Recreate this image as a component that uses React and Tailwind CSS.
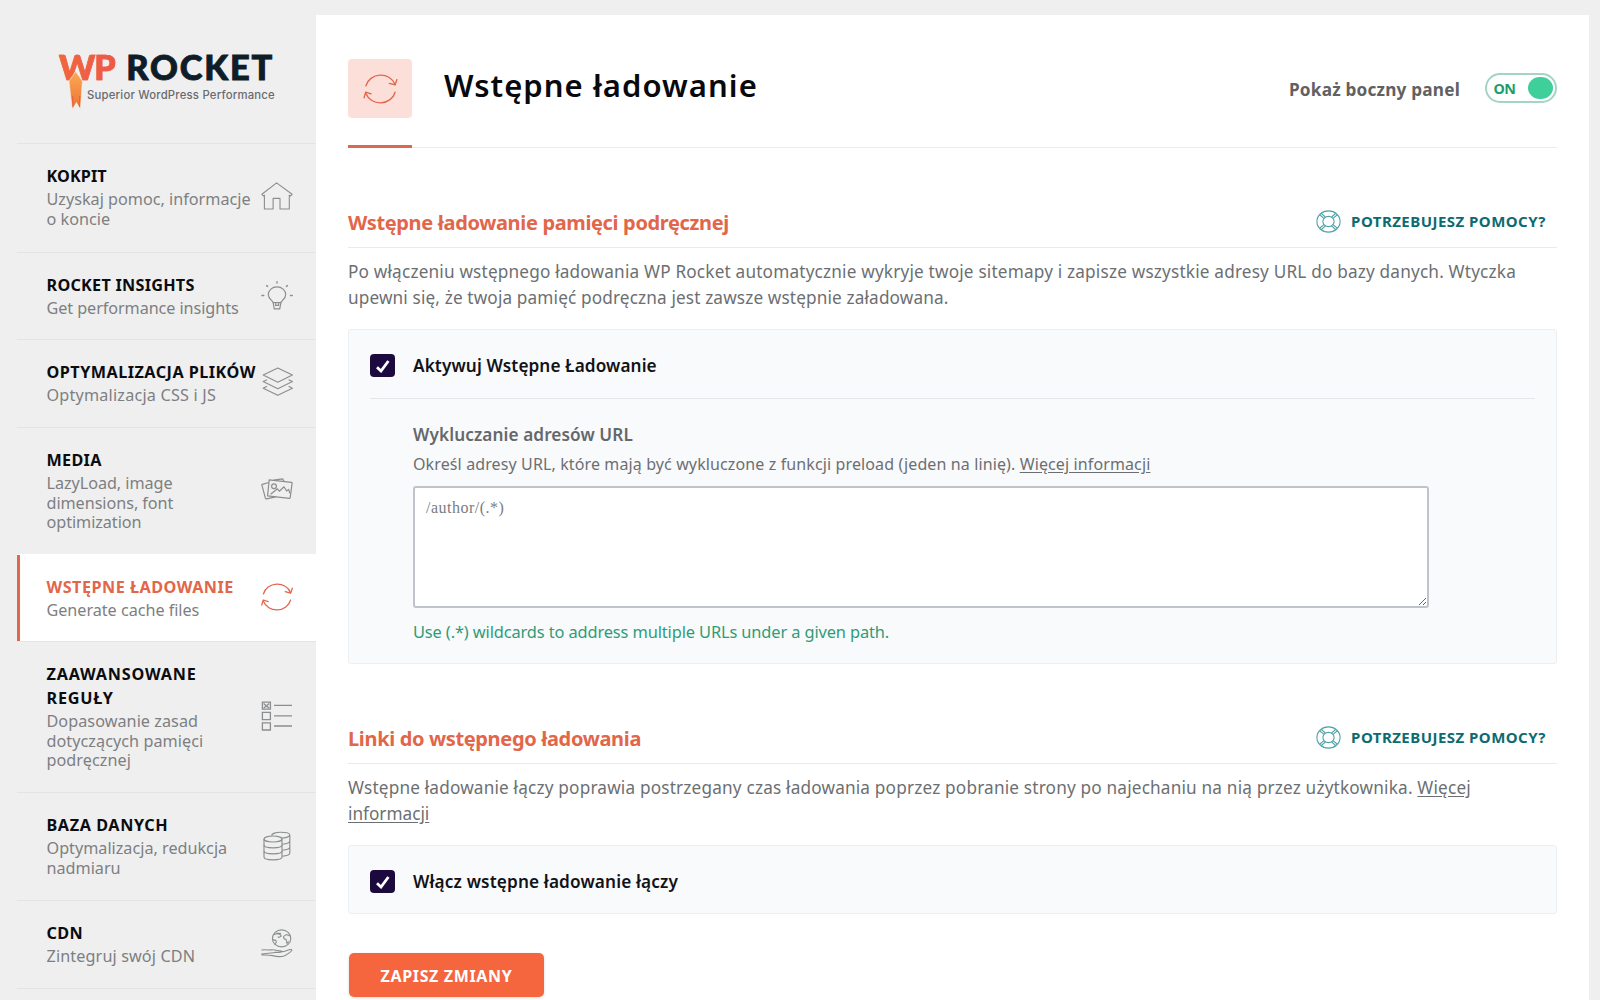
import React from "react";

function HomeIcon() {
  return (
    <svg width="32" height="28" viewBox="0 0 32 28" fill="none" stroke="currentColor" strokeWidth="1.1">
      <path d="M15.6 .9 L.9 12.3 L2.3 14 L3.4 13.1 V27 H12.1 V16.4 H19 V27 H28.3 V13.1 L29.7 14 L31.1 12.3 Z" strokeLinejoin="round" />
    </svg>
  );
}

function BulbIcon() {
  return (
    <svg width="32" height="30" viewBox="0 0 32 30" fill="none" stroke="currentColor" strokeWidth="1.2" strokeLinecap="round">
      <path d="M12.2 21.7 C12 19.8 7.3 18 7.3 13.7 A8.7 7.9 0 0 1 24.7 13.7 C24.7 18 20.2 19.8 19.9 21.7 Z" />
      <path d="M12.2 22 L13.3 27.8 H18.7 L19.9 22 M14.7 22.6 V24.3 H17.6 V22.6" />
      <path d="M16 .8 V2 M5.6 4.6 L6.6 5.4 M26.4 4.6 L25.4 5.4 M.9 14.5 H2.8 M29.5 14.5 H31.2" strokeWidth="1.4" />
    </svg>
  );
}

function LayersIcon() {
  return (
    <svg width="32" height="30" viewBox="0 0 32 30" fill="none" stroke="currentColor" strokeWidth="1.15" strokeLinejoin="round">
      <path d="M16.8 1 L31.4 8.1 L16.8 15.2 L2.2 8.1 Z" />
      <path d="M6 12.7 L2.2 14.6 L16.8 21.7 L31.4 14.6 L27.6 12.7" />
      <path d="M6 19.2 L2.2 21.2 L16.8 28.3 L31.4 21.2 L27.6 19.2" />
    </svg>
  );
}

function MediaIcon() {
  return (
    <svg width="32" height="22" viewBox="0 0 32 22" fill="none" stroke="currentColor" strokeWidth="1.2" strokeLinejoin="round">
      <path d="M8.2 1.9 L30.4 4.3 Q31.2 4.5 31.1 5.2 L29.2 19.6 Q29 20.4 28.1 20.3 L6.6 17.9 Z" />
      <circle cx="13" cy="8.2" r="2.4" />
      <path d="M9.6 16.2 L16.4 10.8 L18.4 13.2 L23 8.8 L25.6 13 L27.6 11.4 L28.9 15.2" />
      <path d="M7.8 4.5 L1.3 6.3 Q.7 6.6 .9 7.2 L4.4 20.2 Q4.7 21 5.6 20.8 L14.6 18.9 M12.6 2.2 L21.6 .8 L23 3.3" />
    </svg>
  );
}

function RefreshIcon({ className }) {
  return (
    <svg className={className} viewBox="0 0 32 28" fill="none" stroke="currentColor" strokeWidth="1.25" strokeLinecap="round" strokeLinejoin="round">
      <path d="M2.4 11 A14.2 13 0 0 1 29.6 9.8" />
      <path d="M24.2 8.7 L29.6 10.2 L31.3 5.2" />
      <path d="M29.6 17 A14.2 13 0 0 1 2.4 18.2" />
      <path d="M7.2 18.6 L2.2 17 L.7 22.2" />
    </svg>
  );
}

function RulesIcon() {
  return (
    <svg width="32" height="30" viewBox="0 0 32 30" fill="none" stroke="currentColor" strokeWidth="1.3">
      <path d="M1.4 1.2 H9.4 V8.2 H1.4 Z M1.4 11.4 H9.4 V18.6 H1.4 Z M1.4 21.8 H9.4 V29 H1.4 Z" />
      <path d="M2.6 2.4 L8.2 7.2 M8.2 2.4 L2.6 7.2 M13 4.4 H31 M13 14.8 H31 M13 25 H31" />
    </svg>
  );
}

function DatabaseIcon() {
  return (
    <svg width="32" height="30" viewBox="0 0 32 30" fill="none" stroke="currentColor" strokeWidth="1.15">
      <ellipse cx="12" cy="8" rx="9" ry="3" />
      <path d="M3 8 V26 C3 27.8 7 28.8 12 28.8 S21 27.8 21 26 V8" />
      <path d="M3 14 C3 15.8 7 16.8 12 16.8 S21 15.8 21 14 M3 20 C3 21.8 7 22.8 12 22.8 S21 21.8 21 20" />
      <path d="M10.6 4.6 C10.6 2.6 14.8 1.2 19.8 1.2 S28.8 2.4 28.8 4 S25 7 20.4 7 M28.8 4 V22 C28.8 23.6 25.8 24.8 21.2 25.2 M28.8 10 C28.8 11.8 25.5 12.9 21.2 13.2 M28.8 16 C28.8 17.8 25.5 18.9 21.2 19.2" />
    </svg>
  );
}

function CdnIcon() {
  return (
    <svg width="32" height="29" viewBox="0 0 32 29" fill="none" stroke="currentColor" strokeWidth="1.1" strokeLinecap="round" strokeLinejoin="round">
      <ellipse cx="20.6" cy="9.4" rx="9.2" ry="8.5" />
      <path d="M13.4 5.6 L16.4 4.6 L19.2 5.4 L20.2 7 L18 8.4 L17 8 M11.8 10.6 L14.8 11.4 L15.4 13 L13.8 15.2 M28.6 6.8 L25.4 5.6 L22.6 7.4 L23 9.8 L25 10.4 L26 14.4 L27.4 12.6 M15.4 4.2 L19.4 4.4" />
      <path d="M.8 21 C3 20.6 5 20.6 7.2 21 C10 21.1 12.4 20.2 15 21.2 C17 22 19.6 21.6 21.4 22.4 C20.6 23.6 17 23.4 13.6 23.4 M21.4 22.8 C24.6 22.4 27.4 20.2 30.6 20.6 C31.8 21.8 27 25 24.2 26.4 C20.8 28 15.6 27.8 11.6 26.6 C8 25.8 4 26 1.6 26 Q.7 26 .7 25 Z" />
    </svg>
  );
}

function HelpIcon() {
  return (
    <svg width="25" height="23" viewBox="0 0 25 23" fill="none" stroke="#4fa3a8" strokeWidth="1.1">
      <ellipse cx="12.5" cy="11.5" rx="11.6" ry="10.6" />
      <ellipse cx="12.5" cy="11.5" rx="5.6" ry="5.1" />
      <path d="M3.6 4.8 L8 8.4 M5.2 3.4 L9.4 7 M21.4 4.8 L17 8.4 M19.8 3.4 L15.6 7 M3.6 18.2 L8 14.6 M5.2 19.6 L9.4 16 M21.4 18.2 L17 14.6 M19.8 19.6 L15.6 16" />
    </svg>
  );
}

const items = [
  { title: "KOKPIT", lines: ["Uzyskaj pomoc, informacje", "o koncie"], h: "h-[109px]", icon: <HomeIcon />, iconTop: "mt-[38px]", track: "tracking-[0.1px]" },
  { title: "ROCKET INSIGHTS", lines: ["Get performance insights"], h: "h-[87px]", icon: <BulbIcon />, iconTop: "mt-[28px]", track: "tracking-[0.26px]", descTrack: "tracking-[-0.07px]" },
  { title: "OPTYMALIZACJA PLIKÓW", lines: ["Optymalizacja CSS i JS"], h: "h-[88px]", icon: <LayersIcon />, iconTop: "mt-[27px]", track: "tracking-[0.48px]", descTrack: "tracking-[0.2px]" },
  { title: "MEDIA", lines: ["LazyLoad, image", "dimensions, font", "optimization"], h: "h-[127px]", icon: <MediaIcon />, iconTop: "mt-[50px]", track: "tracking-[0.3px]", descTrack: "tracking-[-0.05px]" },
  { title: "WSTĘPNE ŁADOWANIE", lines: ["Generate cache files"], h: "h-[87px]", icon: <RefreshIcon className="h-[28px] w-[32px]" />, iconTop: "mt-[28px]", track: "tracking-[0.49px]", descTrack: "tracking-[-0.03px]", active: true },
  { title: "ZAAWANSOWANE REGUŁY", lines: ["Dopasowanie zasad", "dotyczących pamięci", "podręcznej"], h: "h-[151px]", icon: <RulesIcon />, iconTop: "mt-[59px]", track: "tracking-[0.8px]", descTrack: "tracking-[0.05px]" },
  { title: "BAZA DANYCH", lines: ["Optymalizacja, redukcja", "nadmiaru"], h: "h-[108px]", icon: <DatabaseIcon />, iconTop: "mt-[38px]", track: "tracking-[0.6px]" },
  { title: "CDN", lines: ["Zintegruj swój CDN"], h: "h-[88px]", icon: <CdnIcon />, iconTop: "mt-[28px]", track: "tracking-[0.4px]", descTrack: "tracking-[0.12px]" },
];

function Logo() {
  return (
    <div className="h-[143px] pt-[46.5px] pl-[42px]">
      <div className="relative flex h-[40px] items-center font-['Lato',sans-serif] text-[34.4px] leading-[40px] font-black whitespace-nowrap">
        <span className="bg-gradient-to-r from-[#f0683c] to-[#ef564c] bg-clip-text tracking-[-1.1px] text-transparent [-webkit-text-stroke:0.7px_#f06243]">WP</span>
        <span className="ml-[11.5px] tracking-[1.85px] text-[#0f1d29] [-webkit-text-stroke:0.9px_#0f1d29]">ROCKET</span>
        <svg className="absolute top-[23px] left-[8px]" width="18" height="40" viewBox="0 0 18 40">
          <defs>
            <linearGradient id="flame" x1="0" y1="0" x2="0" y2="1">
              <stop offset="0" stopColor="#fbab52" />
              <stop offset="1" stopColor="#ee7038" />
            </linearGradient>
          </defs>
          <path d="M8.6 1.5 L15.4 11 L14.2 27 L13.2 39 L9.4 32.5 L5.4 39 L3.8 27 L2 11 Z" fill="url(#flame)" stroke="#efefef" strokeWidth=".6" />
          <path d="M6 36.5 L5.6 26 M12.6 36.5 L12.8 26" stroke="#e8612f" strokeWidth="1" />
        </svg>
      </div>
      <div className="ml-[28px] font-['Inter',sans-serif] text-[11.3px] leading-[16px] font-medium tracking-[0.22px] whitespace-nowrap text-[#6a6a6e]">
        Superior WordPress Performance
      </div>
    </div>
  );
}

function NavItem({ item }) {
  return (
    <a
      className={`${item.h} flex w-full shrink-0 border-t ${
        item.active ? "border-t-white bg-white shadow-[inset_3px_0_0_#e2664a]" : "border-t-[#e3e4e5]"
      } pl-[29.5px]`}
    >
      <div className="w-[214px] pt-[20px] text-[16.2px]">
        <div className={`leading-[24px] font-bold ${item.track} ${item.active ? "text-[#e2664a]" : "text-[#0b0c10]"}`}>
          {item.title}
        </div>
        <div className={`mt-[2px] leading-[19.7px] whitespace-nowrap text-[#7d7f82] ${item.descTrack || ""}`}>
          {item.lines.map((line) => (
            <div key={line}>{line}</div>
          ))}
        </div>
      </div>
      <div className={`${item.iconTop} ${item.active ? "text-[#e2664a]" : "text-[#8b8d8f]"}`}>{item.icon}</div>
    </a>
  );
}

function SectionHeader({ title, height }) {
  return (
    <div className={`${height} flex items-end justify-between border-b border-[#e8eaeb]`}>
      <h2 className="pb-[10px] text-[20px] leading-[28px] font-bold tracking-[-0.34px] text-[#e2664a]">{title}</h2>
      <div className="flex items-center gap-[10px] pr-[11px] pb-[14.5px]">
        <HelpIcon />
        <span className="text-[15px] leading-[20px] font-bold tracking-[0.47px] text-[#0d6b70]">POTRZEBUJESZ POMOCY?</span>
      </div>
    </div>
  );
}

function CheckRow({ label, track }) {
  return (
    <div className="flex h-[68px] items-start gap-[18px] pt-[24px]">
      <span className="flex h-[23px] w-[25px] items-center justify-center rounded-[4px] bg-[#1c0a3e]">
        <svg width="14" height="14" viewBox="0 0 14 14" fill="none" stroke="#fff" strokeWidth="2.8">
          <path d="M1 8.2 L5 12 L12.4 2" />
        </svg>
      </span>
      <span className={`text-[17.2px] leading-[24px] font-semibold text-[#121317] ${track}`}>{label}</span>
    </div>
  );
}

export default function App() {
  return (
    <div className="flex h-[1000px] w-[1600px] overflow-hidden bg-[#efefef] font-['Noto_Sans',sans-serif]">
      <aside className="ml-[17px] flex w-[299px] shrink-0 flex-col">
        <Logo />
        {items.map((item) => (
          <NavItem key={item.title} item={item} />
        ))}
        <div className="h-[12px] shrink-0 border-t border-[#e3e4e5]" />
      </aside>

      <main className="mt-[15px] mr-[11px] flex-1 bg-white pr-[32px] pl-[32px]">
        <header className="relative flex h-[133px] items-start border-b border-[#eaecec]">
          <div className="mt-[44px] flex h-[59px] w-[64px] items-center justify-center rounded-[4px] bg-[#fddfda] text-[#e2664a]">
            <RefreshIcon className="h-[30px] w-[35px]" />
          </div>
          <h1 className="mt-[50px] ml-[32px] text-[31px] leading-[40px] font-semibold tracking-[1.05px] text-[#08090d]">Wstępne ładowanie</h1>
          <span className="mt-[63px] ml-auto text-[17.2px] leading-[24px] font-bold tracking-[0.2px] text-[#5f6163]">Pokaż boczny panel</span>
          <div className="mt-[58px] ml-[25px] flex h-[30px] w-[72px] items-center justify-between rounded-full border-2 border-[#a3d4c6] bg-white pr-[2.5px] pl-[6.5px]">
            <span className="pt-[2px] text-[14.3px] leading-[20px] font-bold tracking-[-0.5px] text-[#1f9d6b]">ON</span>
            <span className="h-[22.5px] w-[24.5px] rounded-[50%] bg-[#3ecf9b]" />
          </div>
          <div className="absolute -bottom-px left-0 h-[3px] w-[64px] bg-[#d9694f]" />
        </header>

        <SectionHeader title="Wstępne ładowanie pamięci podręcznej" height="h-[100px]" />
        <p className="h-[81px] pt-[11px] text-[17.2px] leading-[26px] tracking-[0.182px] text-[#6c6f72]">
          <span className="whitespace-nowrap">
            Po włączeniu wstępnego ładowania WP Rocket automatycznie wykryje twoje sitemapy i zapisze wszystkie adresy URL do bazy danych. Wtyczka
          </span>
          <br />
          <span className="tracking-[0.14px]">upewni się, że twoja pamięć podręczna jest zawsze wstępnie załadowana.</span>
        </p>

        <section className="h-[335px] rounded-[3px] border border-[#eceff1] bg-[#f9fafc] px-[21px]">
          <CheckRow label="Aktywuj Wstępne Ładowanie" track="tracking-[0.1px]" />
          <div className="border-t border-[#e3e7ea] pl-[43px]">
            <h3 className="mt-[24px] text-[17.2px] leading-[24px] font-semibold tracking-[0.09px] text-[#65686b]">Wykluczanie adresów URL</h3>
            <p className="mt-[5px] text-[16px] leading-[24px] tracking-[0.12px] whitespace-nowrap text-[#6c6f72]">
              Określ adresy URL, które mają być wykluczone z funkcji preload (jeden na linię).{" "}
              <a className="underline underline-offset-2">Więcej informacji</a>
            </p>
            <textarea
              className="mt-[9.5px] block h-[122px] w-[1016px] rounded-[3px] border-2 border-[#bfc4cb] bg-white px-[11px] py-[10px] font-['Liberation_Serif',serif] text-[16px] leading-[20px] tracking-[0.5px] text-[#7b7d80] outline-none"
              defaultValue="/author/(.*)"
            />
            <p className="mt-[12.5px] text-[16.4px] leading-[24px] tracking-[-0.12px] text-[#2f9c77]">
              Use (.*) wildcards to address multiple URLs under a given path.
            </p>
          </div>
        </section>

        <SectionHeader title="Linki do wstępnego ładowania" height="h-[100px]" />
        <p className="h-[81px] pt-[11px] text-[17.2px] leading-[25.5px] tracking-[0.18px] text-[#6c6f72]">
          <span className="whitespace-nowrap">
            Wstępne ładowanie łączy poprawia postrzegany czas ładowania poprzez pobranie strony po najechaniu na nią przez użytkownika.{" "}
            <a className="underline underline-offset-2">Więcej</a>
          </span>
          <br />
          <a className="tracking-[0px] underline underline-offset-2">informacji</a>
        </p>

        <section className="h-[69px] rounded-[3px] border border-[#eceff1] bg-[#f9fafc] px-[21px]">
          <CheckRow label="Włącz wstępne ładowanie łączy" track="tracking-[0.15px]" />
        </section>

        <button className="mt-[39px] ml-[1px] block h-[44px] w-[195px] rounded-[5px] bg-[#f5663f] pt-[1px] text-[16px] leading-[24px] font-bold tracking-[0.65px] text-white shadow-[0_1px_3px_rgba(0,0,0,0.15)]">
          ZAPISZ ZMIANY
        </button>
      </main>
    </div>
  );
}
